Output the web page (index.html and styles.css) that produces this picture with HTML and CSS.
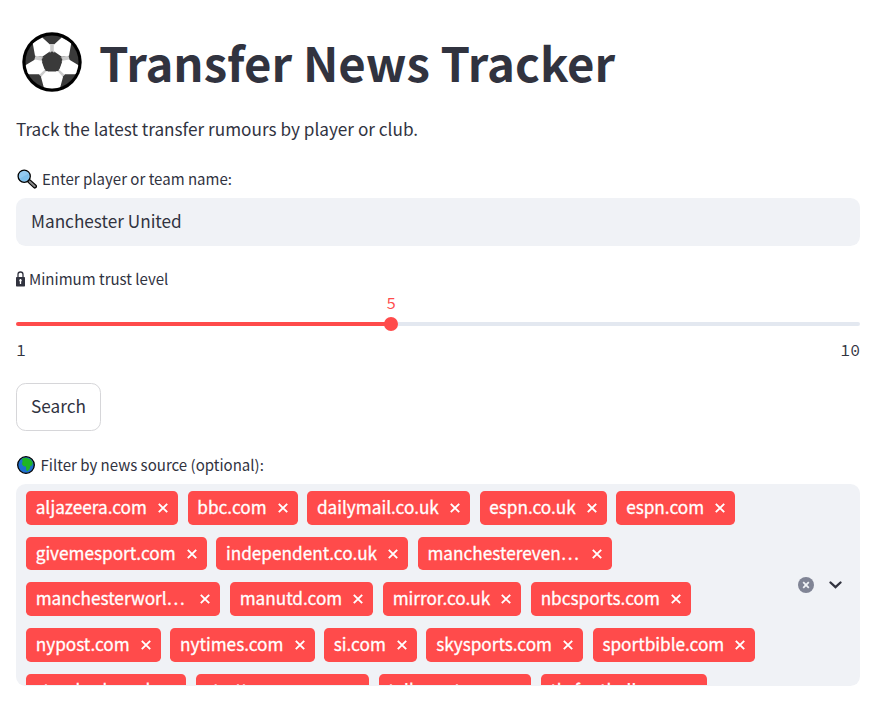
FILE: index.html
```html
<!DOCTYPE html>
<html lang="en">
<head>
<meta charset="utf-8">
<title>Transfer News Tracker</title>
<link rel="stylesheet" href="styles.css">
</head>
<body>
<svg width="0" height="0" class="defs" aria-hidden="true">
  <symbol id="x" viewBox="0 0 10 10"><path d="M.8.8l8.4 8.4M9.2.8L.8 9.2" stroke="currentColor" stroke-width="1.9" fill="none"/></symbol>
</svg>
<main class="app">
  <h1 class="title">
    <svg class="ball" viewBox="0 0 60 60">
      <defs><clipPath id="c"><circle cx="30" cy="30" r="26.500"/></clipPath></defs>
      <circle cx="30" cy="30" r="29.7" fill="#000"/>
      <g clip-path="url(#c)">
        <rect width="60" height="60" fill="#3a3a3a"/>
        <path d="M30 12v9M21 28l-8-2.500M39 28l8-2.500M24.500 38l-6 6M35.500 38l6 6" stroke="#ccc" stroke-width="4.500"/>
        <path d="M10.700 11l9.600-5.500 7.900 7.200v6.600l-8 5.400-7.200-1z M49.300 11l-9.600-5.500-7.900 7.200v6.600l8 5.400 7.200-1z" fill="#fff"/>
        <path d="M2 34l11-6.500 6.500 1.200 3.200 9-4.700 4.600H3z M58 34l-11-6.500-6.500 1.200-3.200 9 4.700 4.600h15z M24 39.500h12l5 5.500-3.500 13h-15L19 45z" fill="#fff"/>
        <path d="M30 19.300l10.400 7.700-4 11.900H23.600L19.600 27z" fill="#3a3a3a"/>
      </g>
    </svg>
    <span class="heading">Transfer News Tracker</span>
  </h1>
  <p class="intro">Track the latest transfer rumours by player or club.</p>

  <label class="label label-search">
    <svg class="glass" viewBox="0 0 20 20">
      <path d="M12 12l5.900 5.400" stroke="#000" stroke-width="4.200" stroke-linecap="round"/>
      <path d="M12.500 12.400l5.200 4.800" stroke="#8a8a8a" stroke-width="2" stroke-linecap="round"/>
      <circle cx="7.200" cy="7.200" r="6.100" fill="#92c9f0" stroke="#000" stroke-width="1.300"/>
      <path d="M3 9.500a4.800 4.800 0 0 0 8.500 0l0-5" fill="#61b2e4" opacity=".4"/>
    </svg>
    <span>Enter player or team name:</span>
  </label>
  <div class="input">Manchester United</div>

  <label class="label label-trust">
    <svg class="lock" viewBox="0 0 9 16">
      <path d="M2 8V3.500a2.500 2.500 0 0 1 5 0V8" fill="none" stroke="currentColor" stroke-width="1.300"/>
      <rect y="6" width="9" height="9.500" rx=".7" fill="currentColor"/>
      <path d="M4.500 8v5M3.300 9.500h2.400" stroke="#fff" stroke-width="1.300"/>
    </svg>
    <span>Minimum trust level</span>
  </label>
  <div class="slider">
    <div class="track"><div class="thumb"><span class="value">5</span></div></div>
    <div class="range"><span>1</span><span>10</span></div>
  </div>

  <button class="button">Search</button>

  <label class="label label-filter">
    <svg class="globe" viewBox="0 0 18 18">
      <circle cx="9" cy="9" r="8.300" fill="#1e6fd0" stroke="#000" stroke-width="1.300"/>
      <path d="M5 2.500l4-.8 4.500 1.500 2.200 3-.4 3.300-1.800.3-.7 2.700-2.200 2.700-1.300-.6-.3-4-2.500-.4L4.800 8l.8-2.600z" fill="#1fb525"/>
    </svg>
    <span>Filter by news source (optional):</span>
  </label>
  <div class="select">
    <div class="tags">
      <span class="tag"><span class="name">aljazeera.com</span><svg><use href="#x"/></svg></span>
      <span class="tag"><span class="name">bbc.com</span><svg><use href="#x"/></svg></span>
      <span class="tag"><span class="name">dailymail.co.uk</span><svg><use href="#x"/></svg></span>
      <span class="tag"><span class="name">espn.co.uk</span><svg><use href="#x"/></svg></span>
      <span class="tag"><span class="name">espn.com</span><svg><use href="#x"/></svg></span>
      <span class="tag"><span class="name">givemesport.com</span><svg><use href="#x"/></svg></span>
      <span class="tag"><span class="name">independent.co.uk</span><svg><use href="#x"/></svg></span>
      <span class="tag"><span class="name cut">manchestereven…</span><svg><use href="#x"/></svg></span>
      <span class="tag"><span class="name cut">manchesterworl…</span><svg><use href="#x"/></svg></span>
      <span class="tag"><span class="name">manutd.com</span><svg><use href="#x"/></svg></span>
      <span class="tag"><span class="name">mirror.co.uk</span><svg><use href="#x"/></svg></span>
      <span class="tag"><span class="name">nbcsports.com</span><svg><use href="#x"/></svg></span>
      <span class="tag"><span class="name">nypost.com</span><svg><use href="#x"/></svg></span>
      <span class="tag"><span class="name">nytimes.com</span><svg><use href="#x"/></svg></span>
      <span class="tag"><span class="name">si.com</span><svg><use href="#x"/></svg></span>
      <span class="tag"><span class="name">skysports.com</span><svg><use href="#x"/></svg></span>
      <span class="tag"><span class="name">sportbible.com</span><svg><use href="#x"/></svg></span>
      <span class="tag"><span class="name">standard.co.uk</span><svg><use href="#x"/></svg></span>
      <span class="tag"><span class="name">strettynews.com</span><svg><use href="#x"/></svg></span>
      <span class="tag"><span class="name">talksport.com</span><svg><use href="#x"/></svg></span>
      <span class="tag"><span class="name">tbrfootball.com</span><svg><use href="#x"/></svg></span>
    </div>
    <div class="controls">
      <svg width="16" height="16" viewBox="0 0 16 16"><circle cx="8" cy="8" r="8" fill="#808495"/><path d="M5.200 5.200l5.600 5.600M10.800 5.200l-5.600 5.600" stroke="#f0f2f6" stroke-width="1.800"/></svg>
      <svg width="13" height="8" viewBox="0 0 13 8"><path d="M1.500 1.500l5 4.700 5-4.700" fill="none" stroke="#31333f" stroke-width="2.300" stroke-linecap="round"/></svg>
    </div>
  </div>
</main>
</body>
</html>
```
FILE: styles.css
```css
* { box-sizing: border-box; }
body {
  margin: 0;
  background: #fff;
  color: #31333f;
  font-family: "Source Sans Pro", "Noto Sans CJK SC", sans-serif;
  font-size: 17.2px;
}
.defs { position: absolute; }
.app {
  display: flex;
  flex-direction: column;
  align-items: flex-start;
  width: 844px;
  margin-left: 16px;
  padding-top: 31px;
}
.title {
  display: flex;
  align-items: center;
  gap: 17px;
  height: 62px;
  margin: 0;
  padding-left: 6px;
  font-size: 47.3px;
  font-weight: 700;
  line-height: 62px;
  white-space: nowrap;
}
.heading { padding-bottom: 1px; }
.ball { width: 60px; height: 60px; }
.intro { margin: 21px 0 0; line-height: 30px; }
.label {
  display: flex;
  align-items: center;
  height: 24px;
  font-size: 15.04px;
  line-height: 24px;
}
.label-search { margin-top: 23px; gap: 5px; padding-left: 1px; }
.glass { width: 20px; height: 20px; }
.input {
  width: 100%;
  height: 48px;
  margin-top: 7px;
  padding-left: 15px;
  border-radius: 9.6px;
  background: #f0f2f6;
  line-height: 46px;
}
.label-trust { margin-top: 21px; gap: 4px; }
.lock { width: 9px; height: 16px; }
.slider { width: 100%; margin-top: 31px; }
.track {
  position: relative;
  height: 4px;
  border-radius: 2px;
  background: linear-gradient(to right, #ff4b4b 44.444%, #e3e8f0 44.444%);
}
.thumb {
  position: absolute;
  top: -5px;
  left: calc(44.444% - 7px);
  display: flex;
  justify-content: center;
  width: 14.4px;
  height: 14.4px;
  border-radius: 50%;
  background: #ff4b4b;
}
.value { position: absolute; bottom: 18px; color: #ff4b4b; }
.value, .range {
  font-family: "Source Code Pro", "Liberation Mono", monospace;
  font-size: 16.4px;
  line-height: 20px;
}
.range { display: flex; justify-content: space-between; margin-top: 14px; }
.button {
  height: 48px;
  margin: 23px 0 0;
  padding: 0 14px 3px;
  border: 1px solid #d6d6d9;
  border-radius: 9.6px;
  background: #fff;
  color: inherit;
  font: inherit;
}
.label-filter { margin-top: 22px; gap: 5.5px; padding-left: 1px; }
.globe { width: 18px; height: 18px; }
.select {
  display: flex;
  width: 100%;
  height: 201.600px;
  margin-top: 7px;
  border-radius: 9.6px;
  background: #f0f2f6;
  overflow: hidden;
}
.tags {
  display: flex;
  flex-wrap: wrap;
  align-content: flex-start;
  gap: 12px 9.6px;
  width: 760px;
  height: 200.6px;
  padding: 7.2px 0 0 10px;
  overflow: hidden;
}
.tag {
  display: flex;
  align-items: center;
  height: 33.6px;
  padding: 0 9.9px 0 9.7px;
  border-radius: 4.8px;
  background: #ff4b4b;
  color: #fff;
  line-height: 32px;
}
.name { height: 33.6px; white-space: nowrap; -webkit-text-stroke: .3px #fff; }
.cut { width: 153.6px; }
.tag svg { width: 10px; height: 10px; margin-left: 11.2px; }
.controls { display: flex; align-items: center; gap: 15px; margin-left: 22px; }
```
